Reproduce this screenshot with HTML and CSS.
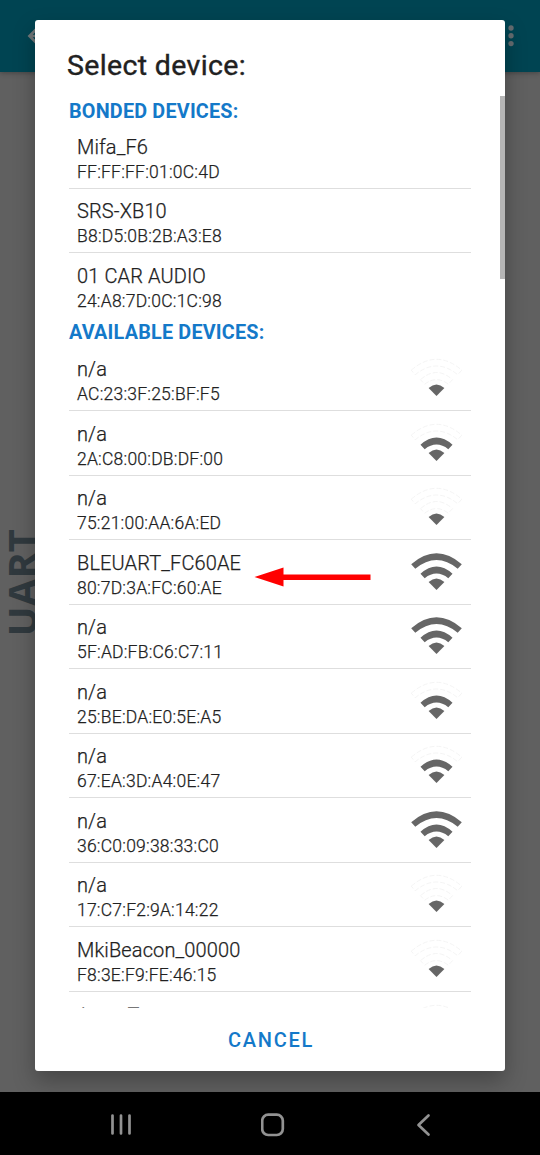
FILE: index.html
```html
<!DOCTYPE html>
<html lang="en">
<head>
<meta charset="utf-8">
<title>Select device</title>
<link rel="stylesheet" href="styles.css">
</head>
<body>
<svg class="defs" width="0" height="0">
  <defs>
    <path id="dot" d="M26.500 38L18.600 30Q26.500 23 34.400 30Z"/>
    <path id="mid" d="M10.500 21.700Q26.500 7.300 42.500 21.700L38.300 26.200Q26.500 17 14.700 26.200Z"/>
    <path id="top" d="M1.200 12.200Q26.500 -9.600 51.800 12.200L47.700 16.700Q26.500 -.700 5.300 16.700Z"/>
    <symbol id="wifi1" viewBox="0 0 53 40"><use href="#top" class="off"/><use href="#mid" class="off"/><use href="#dot" class="on"/></symbol>
    <symbol id="wifi2" viewBox="0 0 53 40"><use href="#top" class="off"/><use href="#mid" class="on"/><use href="#dot" class="on"/></symbol>
    <symbol id="wifi3" viewBox="0 0 53 40"><use href="#top" class="on"/><use href="#mid" class="on"/><use href="#dot" class="on"/></symbol>
  </defs>
</svg>
<div class="screen">
  <header class="appbar">
    <svg class="back" width="24" height="24" viewBox="0 0 24 24"><path d="M23 12H4M12 3.500L3.500 12L12 20.500"/></svg>
    <svg class="more" width="6" height="24" viewBox="0 0 6 24"><circle cx="3" cy="4" r="2.700"/><circle cx="3" cy="11.800" r="2.700"/><circle cx="3" cy="19.600" r="2.700"/></svg>
  </header>
  <main class="page"><span class="uart">UART</span></main>
  <nav class="navbar">
    <svg width="24" height="24" viewBox="0 0 24 24"><path d="M3.500 2.500V20.500M12 2.500V20.500M20.500 2.500V20.500"/></svg>
    <svg width="24" height="24" viewBox="0 0 24 24"><rect x="1.200" y="1.700" width="20.600" height="20.300" rx="6"/></svg>
    <svg width="24" height="24" viewBox="0 0 24 24"><path d="M16.500 2.500L6.500 12L16.500 21.500"/></svg>
  </nav>
  <section class="dialog">
    <h1 class="title">Select device:</h1>
    <div class="list">
      <h2 class="group bonded">BONDED DEVICES:</h2>
      <div class="row"><div class="name">Mifa_F6</div><div class="addr">FF:FF:FF:01:0C:4D</div></div>
      <div class="row"><div class="name">SRS-XB10</div><div class="addr">B8:D5:0B:2B:A3:E8</div></div>
      <div class="row last"><div class="name">01 CAR AUDIO</div><div class="addr">24:A8:7D:0C:1C:98</div></div>
      <h2 class="group available">AVAILABLE DEVICES:</h2>
      <div class="row"><div class="name">n/a</div><div class="addr">AC:23:3F:25:BF:F5</div><svg class="wifi"><use href="#wifi1"/></svg></div>
      <div class="row"><div class="name">n/a</div><div class="addr">2A:C8:00:DB:DF:00</div><svg class="wifi"><use href="#wifi2"/></svg></div>
      <div class="row"><div class="name">n/a</div><div class="addr">75:21:00:AA:6A:ED</div><svg class="wifi"><use href="#wifi1"/></svg></div>
      <div class="row"><div class="name">BLEUART_FC60AE</div><div class="addr">80:7D:3A:FC:60:AE</div><svg class="wifi"><use href="#wifi3"/></svg></div>
      <div class="row"><div class="name">n/a</div><div class="addr">5F:AD:FB:C6:C7:11</div><svg class="wifi"><use href="#wifi3"/></svg></div>
      <div class="row"><div class="name">n/a</div><div class="addr">25:BE:DA:E0:5E:A5</div><svg class="wifi"><use href="#wifi2"/></svg></div>
      <div class="row"><div class="name">n/a</div><div class="addr">67:EA:3D:A4:0E:47</div><svg class="wifi"><use href="#wifi2"/></svg></div>
      <div class="row"><div class="name">n/a</div><div class="addr">36:C0:09:38:33:C0</div><svg class="wifi"><use href="#wifi3"/></svg></div>
      <div class="row"><div class="name">n/a</div><div class="addr">17:C7:F2:9A:14:22</div><svg class="wifi"><use href="#wifi1"/></svg></div>
      <div class="row"><div class="name">MkiBeacon_00000</div><div class="addr">F8:3E:F9:FE:46:15</div><svg class="wifi"><use href="#wifi1"/></svg></div>
      <div class="row partial"><div class="name">Aura_T</div><svg class="wifi"><use href="#wifi1"/></svg></div>
    </div>
    <div class="actions"><button class="cancel">CANCEL</button></div>
    <i class="scrollbar"></i>
  </section>
  <svg class="arrow" width="118" height="22" viewBox="0 0 118 22"><path d="M.500 11L29.500 1.500V8.500H116.500V14H29.500V20.500Z"/></svg>
</div>
</body>
</html>
```

FILE: styles.css
```css
* { box-sizing: border-box; }
body { margin: 0; font-family: Roboto, sans-serif; color: #212121; }
.defs { position: absolute; }
.screen { position: relative; width: 540px; height: 1155px; overflow: hidden; display: flex; flex-direction: column; background: #606060; }
.appbar { height: 72px; flex: none; padding: 0 26px; display: flex; justify-content: space-between; align-items: center; background: #004452; box-shadow: 0 1px 5px rgba(0,0,0,.3); z-index: 1; }
.back { fill: none; stroke: #717678; stroke-width: 2.7; }
.more { fill: #656c70; }
.page { flex: 1; display: flex; align-items: flex-start; padding: 457px 0 0 2px; }
.uart { writing-mode: vertical-rl; transform: rotate(180deg); font-family: "Open Sans", sans-serif; font-size: 40px; line-height: 40px; font-weight: 700; color: #30393e; }
.navbar { height: 63px; flex: none; background: #000; display: flex; justify-content: space-between; padding: 21px 104px 0 109px; }
.navbar svg { fill: none; stroke: #929292; stroke-width: 2.7; stroke-linecap: round; stroke-linejoin: round; }
.dialog { position: absolute; z-index: 2; left: 35px; top: 20px; width: 470px; height: 1051px; border-radius: 3px; background: #fff; box-shadow: 0 10px 22px rgba(0,0,0,.28); display: flex; flex-direction: column; }
.title { margin: 0; height: 76px; padding: 26px 0 0 32px; font-size: 28.5px; line-height: 40px; font-weight: 400; letter-spacing: .35px; -webkit-text-stroke: .4px #212121; }
.list { height: 912px; overflow: hidden; padding: 0 34px; }
.group { margin: 0; padding-top: 1.5px; font-size: 19.8px; line-height: 28px; font-weight: 700; letter-spacing: .2px; color: #1479c9; white-space: nowrap; }
.bonded { height: 28px; }
.available { height: 29px; }
.row { height: 64.5px; padding: 10.6px 8px 0; border-bottom: 1.5px solid #dedede; display: grid; grid-template: 25px 25px / 1fr 53px; }
.last { border-bottom: 0; }
.name, .addr { grid-column: 1; white-space: nowrap; font-weight: 300; -webkit-text-stroke: .25px #212121; }
.name { font-size: 20px; line-height: 24px; letter-spacing: .12px; }
.addr { font-size: 17.5px; line-height: 25px; letter-spacing: .22px; }
.partial { padding-top: 11.5px; }
.partial .name { color: #777; letter-spacing: .3px; -webkit-text-stroke: 0; }
.wifi { grid-column: 2; grid-row: 1 / 3; width: 53px; height: 40px; margin-top: 1px; }
.on { fill: #666; }
.off { fill: none; stroke: #f1f1f1; stroke-width: .8; stroke-dasharray: 5 2; }
.actions { flex: 1; display: flex; justify-content: center; padding: 12px 0 0 2px; }
.cancel { height: 40px; padding: 0; border: 0; background: none; font: 500 20px/40px Roboto, sans-serif; letter-spacing: 1.7px; color: #1479c9; }
.scrollbar { position: absolute; right: 0; top: 76px; width: 5.5px; height: 183px; background: #b6b6b6; }
.arrow { position: absolute; z-index: 3; left: 254px; top: 566px; fill: #f00; }
```
